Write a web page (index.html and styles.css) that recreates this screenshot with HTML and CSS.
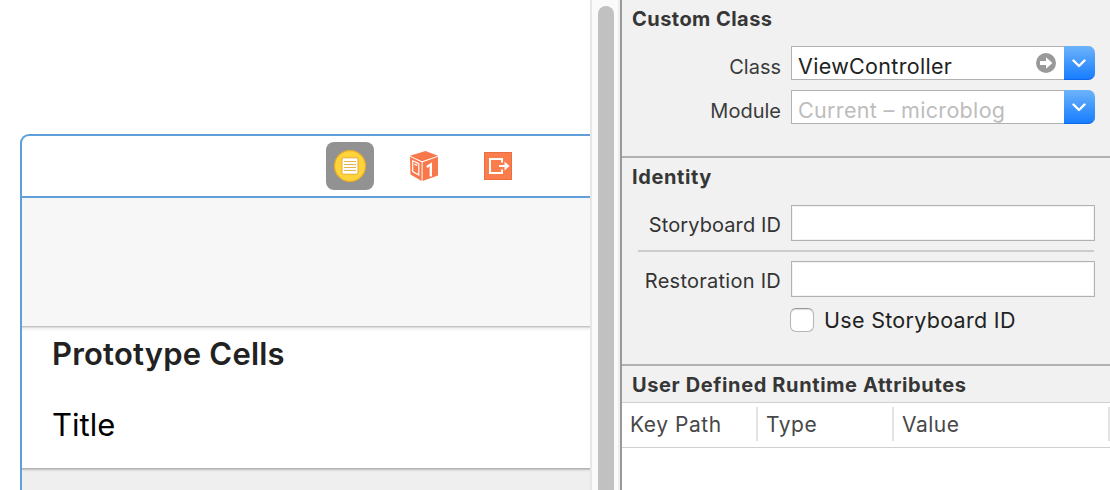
FILE: index.html
```html
<!DOCTYPE html>
<html lang="en">
<head>
<meta charset="utf-8">
<title>Identity Inspector</title>
<link rel="stylesheet" href="styles.css">
</head>
<body>
<div class="window">
  <main class="canvas">
    <section class="scene">
      <div class="dock">
        <span class="dock-item selected">
          <svg width="34" height="34" viewBox="0 0 34 34">
            <circle cx="17" cy="17" r="15.4" fill="#ffd33a" stroke="#eeb024" stroke-width="1.2"/>
            <rect x="9" y="8.8" width="16" height="16.4" rx="1" fill="#fff" stroke="#e8aa2d"/>
            <path d="M11 12.5h12M11 15.5h12M11 18.5h12M11 21.5h12" stroke="#e9b54a" stroke-width="1"/>
          </svg>
        </span>
        <span class="dock-item">
          <svg width="36" height="36" viewBox="0 0 36 36">
            <path d="M4 7.800 19.500 3 32 7.800 16 13.200z" fill="#f8784b"/>
            <path d="M4 8.800 15.600 14.200V32.900L4.500 26.500z" fill="#f8784b"/>
            <path d="M16.600 14.200 32 8.800V27.400L16.600 32.900z" fill="#f8784b"/>
            <path d="M6.700 12.800 12.800 15.600V27L6.700 23.600z" fill="none" stroke="#fff" stroke-width="1.200"/>
            <path d="M8.500 16.200 11.200 17.400" fill="none" stroke="#fff" stroke-width="1.300"/>
            <path d="M20.800 19 24.800 16.400V28.600" fill="none" stroke="#fff" stroke-width="2.300"/>
          </svg>
        </span>
        <span class="dock-item">
          <svg width="28" height="28" viewBox="0 0 28 28">
            <rect x=".5" y=".5" width="27" height="27" fill="#fc7d4c" stroke="#e96f45"/>
            <path d="M18 10.500V7H6v14h12v-3.500" fill="none" stroke="#fff" stroke-width="2"/>
            <path d="M15 13h5.500V9.500L25.500 14l-5 4.500V15H15z" fill="#fff"/>
          </svg>
        </span>
      </div>
      <div class="navbar"></div>
      <div class="table">
        <h2 class="table-head"><span class="t-proto">Prototype Cells</span></h2>
        <div class="cell"><span class="t-title">Title</span></div>
      </div>
      <div class="table-rest"></div>
    </section>
  </main>
  <div class="scroller"><div class="thumb"></div></div>
  <aside class="inspector">
    <section class="group custom">
      <h3 class="heading"><span class="t-custom">Custom Class</span></h3>
      <div class="row combo-row">
        <label class="label t-class">Class</label>
        <div class="combo">
          <span class="value t-view">ViewController</span>
          <svg class="jump" width="20" height="20" viewBox="0 0 20 20"><circle cx="10" cy="10" r="10" fill="#999"/><path d="M4 8h6V4.200l6.400 5.800L10 15.800V12H4z" fill="#fff"/></svg>
          <span class="drop"><svg width="14" height="9" viewBox="0 0 14 9"><path d="M1.500 1.500 7 7l5.500-5.500" fill="none" stroke="#fff" stroke-width="2.400" stroke-linecap="round" stroke-linejoin="round"/></svg></span>
        </div>
      </div>
      <div class="row combo-row">
        <label class="label t-module">Module</label>
        <div class="combo">
          <span class="value placeholder t-current">Current – microblog</span>
          <span class="drop"><svg width="14" height="9" viewBox="0 0 14 9"><path d="M1.500 1.500 7 7l5.500-5.500" fill="none" stroke="#fff" stroke-width="2.400" stroke-linecap="round" stroke-linejoin="round"/></svg></span>
        </div>
      </div>
    </section>
    <section class="group identity">
      <h3 class="heading"><span class="t-identity">Identity</span></h3>
      <div class="row"><label class="label t-story">Storyboard ID</label><div class="field"></div></div>
      <div class="rule"></div>
      <div class="row"><label class="label t-rest">Restoration ID</label><div class="field"></div></div>
      <div class="check-row"><span class="checkbox"></span><span class="t-use">Use Storyboard ID</span></div>
    </section>
    <section class="group attributes">
      <h3 class="heading"><span class="t-user">User Defined Runtime Attributes</span></h3>
      <div class="columns">
        <div class="col key"><span class="t-key">Key Path</span></div>
        <div class="col type"><span class="t-type">Type</span></div>
        <div class="col val"><span class="t-value">Value</span></div>
      </div>
    </section>
  </aside>
</div>
</body>
</html>
```
FILE: styles.css
```css
* { box-sizing: border-box; }
body { margin: 0; background: #fff; font-family: Inter, "Liberation Sans", sans-serif; overflow: hidden; }
h2, h3 { margin: 0; font-weight: 600; }
svg { display: block; flex: none; }
span, label { white-space: nowrap; }
.window { display: flex; width: 1110px; height: 490px; overflow: hidden; }

.canvas { width: 590px; padding: 134px 0 0 20px; }
.scene { height: 356px; display: flex; flex-direction: column; border: 2px solid #5f9fda; border-right: 0; border-bottom: 0; border-radius: 9px 0 0 0; }
.dock { height: 62px; flex: none; display: flex; align-items: center; gap: 26px; padding-left: 304px; border-bottom: 2px solid #5f9fda; }
.dock-item { width: 48px; height: 48px; display: flex; align-items: center; justify-content: center; border-radius: 8px; }
.selected { background: #929292; }
.navbar { height: 128px; flex: none; background: #f7f7f7; }
.table { height: 142px; flex: none; padding-left: 30px; background: linear-gradient(#c4c4c4 0 1px, #dcdcdc 1px 2px, #f2f2f2 2px 3px, #fff 5px); }
.table-head { height: 57px; font-size: 31px; line-height: 56px; color: #222; }
.cell { font-size: 31px; line-height: 84px; color: #000; }
.table-rest { flex: 1; background: linear-gradient(#b5b5b5 0 1px, #c6c6c6 1px 2px, #e4e4e4 2px 3px, #efefef 4px); }

.scroller { width: 30px; padding: 6px 4px 0 6px; background: #fafafa; border-left: 2px solid #e6e6e6; border-right: 2px solid #eee; }
.thumb { width: 16px; height: 500px; border-radius: 8px; background: #c1c1c1; }

.inspector { width: 490px; background: #f1f1f1; border-left: 2px solid #999; }
.heading { font-size: 20px; line-height: 24px; font-weight: 700; color: #363636; padding-left: 10px; }
.custom { height: 156px; padding-top: 7px; }
.row { display: flex; align-items: center; gap: 10px; }
.label { width: 159px; text-align: right; font-size: 20px; line-height: 24px; color: #3c3c3c; }
.combo { width: 304px; height: 34px; display: flex; align-items: center; background: #fff; border: 1px solid #b2b2b2; border-right: 0; border-radius: 0 7px 7px 0; }
.custom .heading { margin-bottom: 15px; }
.combo-row + .combo-row { margin-top: 10px; }
.combo-row .label { padding-top: 7px; }
.value { flex: 1; padding: 5px 0 0 6px; font-size: 21.5px; line-height: 26px; color: #222; }
.value.placeholder { color: #bdbdbd; }
.jump { margin-right: 8px; }
.drop { width: 31px; height: 34px; display: flex; flex: none; align-items: center; justify-content: center; border-radius: 0 7px 7px 0; background: linear-gradient(#6cb3fa, #187dff); border-bottom: 1px solid #0e68ec; }
.drop svg { margin: 1px 1px 0 0; }
.identity { height: 208px; border-top: 2px solid #b1b1b1; padding-top: 7px; }
.identity .heading { margin-bottom: 16px; }
.identity .label { padding-top: 3px; color: #333; }
.field { width: 304px; height: 36px; background: #fff; border: 1px solid #b2b2b2; box-shadow: inset 0 0 0 1px #f3f3f3; }
.rule { width: 456px; height: 2px; margin: 9px 0 9px 16px; background: #ccc; }
.check-row { display: flex; align-items: center; gap: 10px; padding: 10px 0 0 168px; font-size: 21.5px; line-height: 26px; color: #222; }
.checkbox { width: 24px; height: 24px; border: 1px solid #b5b5b5; border-top-color: #999; border-radius: 6px; background: #fff; box-shadow: inset 0 1px 1px #ddd; }
.attributes { height: 126px; border-top: 2px solid #b1b1b1; background: #fff; }
.attributes .heading { height: 36px; line-height: 38px; background: #f1f1f1; }
.columns { height: 46px; display: flex; padding: 4px 0 6px; border-top: 1px solid #d0d0d0; border-bottom: 1px solid #d0d0d0; }
.col { border-right: 2px solid #e3e3e3; font-size: 21px; line-height: 36px; color: #484848; }
.key { width: 136px; padding-left: 8px; }
.type { width: 136px; padding-left: 8px; }
.val { width: 216px; padding-left: 8px; }

/* Tracking per string */
.t-proto { letter-spacing: .2px; }
.t-custom { letter-spacing: .45px; }
.t-identity { letter-spacing: .6px; }
.t-user { letter-spacing: .62px; }
.t-view { letter-spacing: .32px; }
.t-current { letter-spacing: .33px; }
.t-story { letter-spacing: .1px; }
.t-rest { letter-spacing: .26px; }
.t-use { letter-spacing: .3px; }
.t-key { letter-spacing: .55px; }
.t-type { letter-spacing: .5px; }
.t-value { letter-spacing: .5px; }
```
